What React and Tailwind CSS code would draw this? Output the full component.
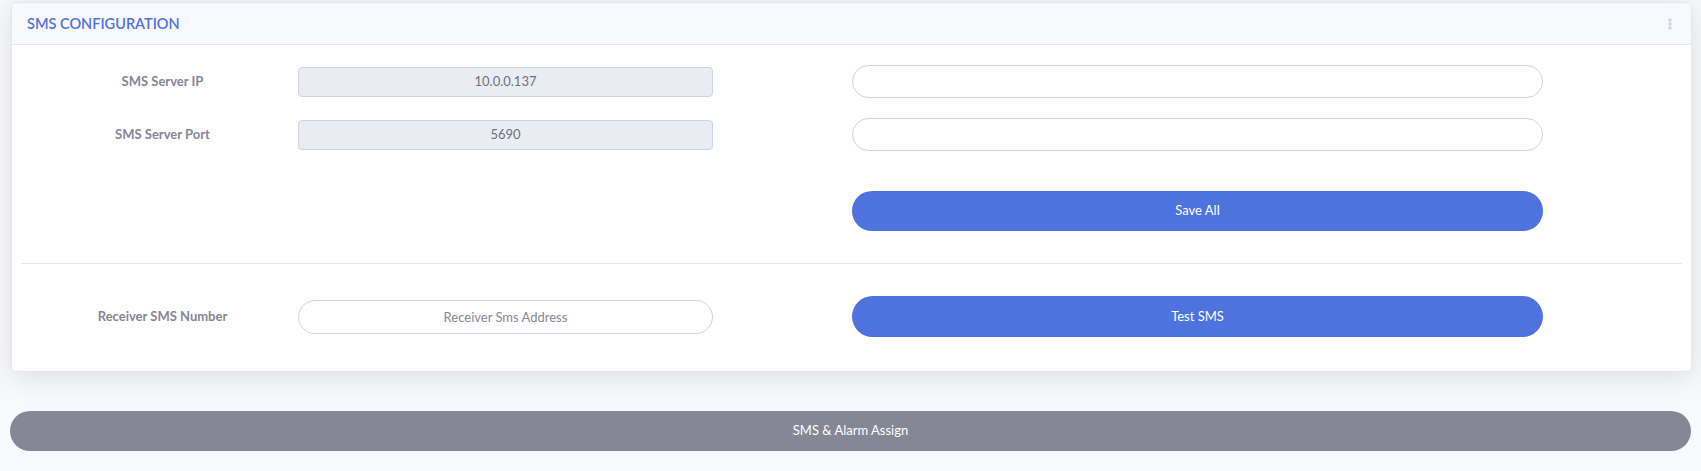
function Kebab() {
  return (
    <svg width="4" height="12" viewBox="0 0 4 12" className="text-[#d1d3e2]">
      <circle cx="2" cy="2" r="1.7" fill="currentColor" />
      <circle cx="2" cy="6" r="1.7" fill="currentColor" />
      <circle cx="2" cy="10" r="1.7" fill="currentColor" />
    </svg>
  );
}

function Label({ children }) {
  return (
    <div className="pl-[6px] text-center text-[13px] font-bold text-[#858796]">{children}</div>
  );
}

function ReadonlyField({ value }) {
  return (
    <div className="h-[30px] rounded-[4px] border border-[#d1d3e2] bg-[#eaecf4] flex items-center justify-center text-[13px] text-[#6e707e]">
      {value}
    </div>
  );
}

function PillInput({ placeholder = "", tall = false }) {
  return (
    <input
      className={
        (tall ? "h-[34px] " : "h-[33px] ") +
        "w-full rounded-full border border-[#d1d3e2] bg-white text-center text-[13px] text-[#6e707e] outline-none placeholder:text-[#858796]"
      }
      placeholder={placeholder}
    />
  );
}

function PrimaryButton({ children }) {
  return (
    <button className="h-[40px] w-full rounded-full bg-[#4e73df] text-[13px] text-white">
      {children}
    </button>
  );
}

export default function App() {
  return (
    <div className="min-h-[471px] bg-[#f8f9fc] pl-[11px] pr-[9px] pt-[2px] font-['Lato','Liberation_Sans',sans-serif]">
      <div className="rounded-[5px] border border-[#e3e6f0] bg-white shadow-[0_4px_28px_0_rgba(58,59,69,0.15)]">
        {/* header */}
        <div className="flex h-[42px] items-center justify-between rounded-t-[5px] border-b border-[#e3e6f0] bg-[#f8f9fc] pl-[15px] pr-[19px]">
          <h6 className="text-[14.5px] font-semibold text-[#4e73df]">SMS CONFIGURATION</h6>
          <Kebab />
        </div>

        {/* body */}
        <div className="px-[9px] pt-[20px] pb-[34px]">
          <div className="grid grid-cols-[277px_415px_139px_691px] items-center gap-y-[20px]">
            <Label>SMS Server IP</Label>
            <ReadonlyField value="10.0.0.137" />
            <div />
            <PillInput />

            <Label>SMS Server Port</Label>
            <ReadonlyField value="5690" />
            <div />
            <PillInput />

            <div className="col-start-4 mt-[20px]">
              <PrimaryButton>Save All</PrimaryButton>
            </div>
          </div>

          <hr className="mt-[32px] mb-[32px] border-[#e3e6f0]" />

          <div className="grid grid-cols-[277px_415px_139px_691px] items-center">
            <Label>Receiver SMS Number</Label>
            <PillInput placeholder="Receiver Sms Address" tall />
            <div />
            <button className="h-[41px] w-full rounded-full bg-[#4e73df] text-[13px] text-white">Test SMS</button>
          </div>
        </div>
      </div>

      <button className="mt-[39px] h-[40px] w-full -ml-px rounded-full bg-[#858796] text-[13px] text-white">
        SMS &amp; Alarm Assign
      </button>
    </div>
  );
}
